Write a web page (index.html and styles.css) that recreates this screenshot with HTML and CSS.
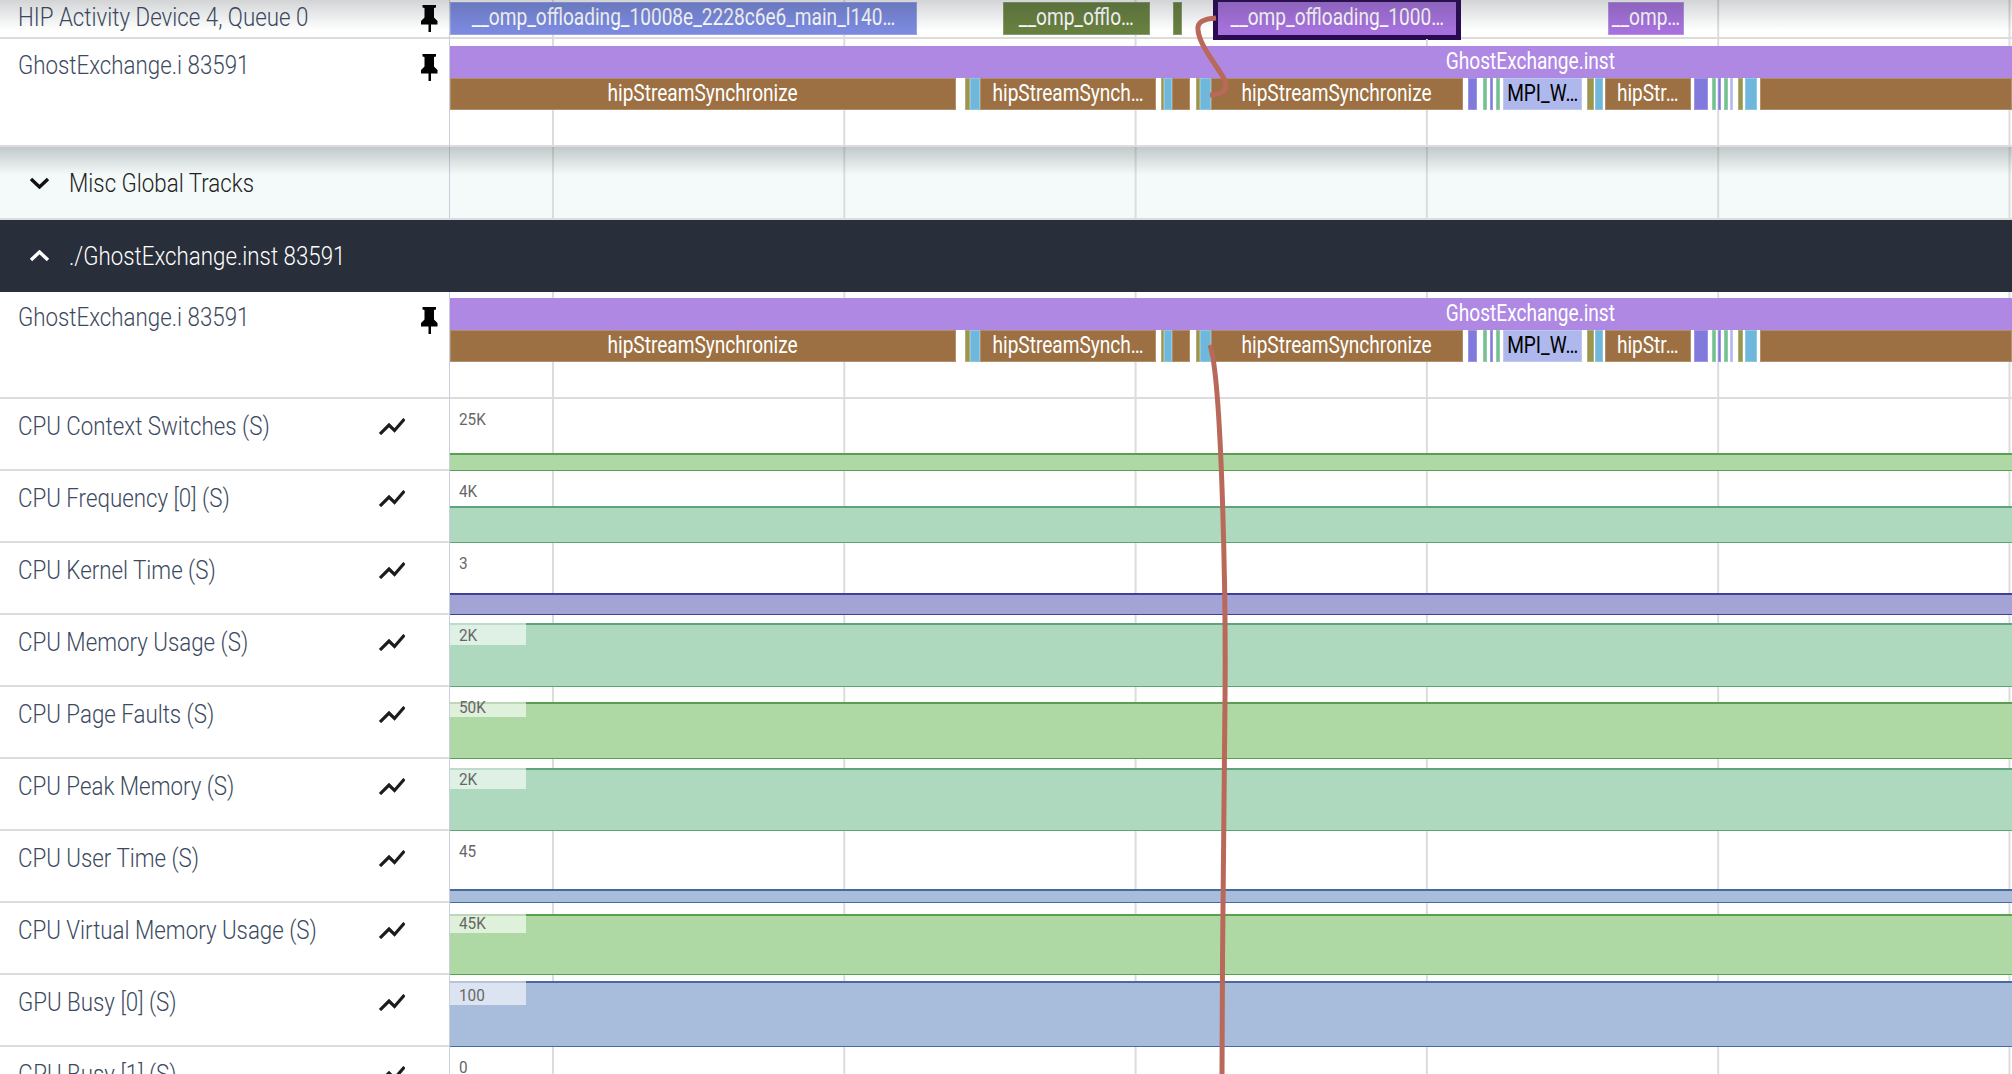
FILE: index.html
```html
<!DOCTYPE html>
<html lang="en">
<head>
    <meta charset="UTF-8">
    <title>GhostExchange trace</title>
    <link rel="stylesheet" href="styles.css">
</head>
<body>
<div class="page">
    <svg width="0" height="0" class="defs">
        <symbol id="pin" viewBox="0 0 17 27">
            <path d="M1.500 0h13.500v2.500l-2 .5v9.500l3.500 3.500v3.500h-6.500v7.500h-2.500v-7.500h-7.500v-3.500l3.500-3.500v-9.500l-2-.5z"></path>
        </symbol>
        <symbol id="chart" viewBox="0 0 26 17">
            <path d="M1 16l9-9 5.500 5.500 10-11.500" fill="none" stroke="#1c1c1c" stroke-width="3.200"></path>
        </symbol>
    </svg>

    <div class="row row-top">
        <div class="label"><span class="name">HIP Activity Device 4, Queue 0</span><svg class="pin"><use href="#pin"></use></svg></div>
        <div class="lane">
            <div class="slices">
                <div class="slice c-blue" style="left:0;width:467px"><span>__omp_offloading_10008e_2228c6e6_main_l140…</span></div>
                <div class="slice c-green" style="left:553px;width:147px"><span>__omp_offlo…</span></div>
                <div class="slice c-green" style="left:723px;width:9px"></div>
                <div class="slice c-violet selected" style="left:768px;width:238px"><span>__omp_offloading_1000…</span></div>
                <div class="slice c-violet" style="left:1158px;width:76px"><span>__omp…</span></div>
            </div>
        </div>
    </div>

    <div class="row row-process">
        <div class="label"><span class="name">GhostExchange.i 83591</span><svg class="pin"><use href="#pin"></use></svg></div>
        <div class="lane">
            <div class="process-bar"><span>GhostExchange.inst</span></div>
            <div class="slices">
                <div class="slice c-brown" style="left:0;width:506px"><span>hipStreamSynchronize</span></div>
                <div class="slice c-olive" style="left:515px;width:5px"></div>
                <div class="slice c-sky" style="left:520px;width:10px"></div>
                <div class="slice c-brown" style="left:530px;width:176px"><span>hipStreamSynch…</span></div>
                <div class="slice c-olive" style="left:711px;width:3px"></div>
                <div class="slice c-sky" style="left:714px;width:8px"></div>
                <div class="slice c-brown" style="left:722px;width:18px"></div>
                <div class="slice c-olive" style="left:746px;width:4px"></div>
                <div class="slice c-sky" style="left:750px;width:11px"></div>
                <div class="slice c-brown" style="left:761px;width:252px"><span>hipStreamSynchronize</span></div>
                <div class="slice c-indigo" style="left:1018px;width:9px"></div>
                <div class="slice c-mint" style="left:1033px;width:4px"></div>
                <div class="slice c-indigo" style="left:1040px;width:3px"></div>
                <div class="slice c-mint" style="left:1046px;width:4px"></div>
                <div class="slice c-lav" style="left:1053px;width:79px"><span>MPI_W…</span></div>
                <div class="slice c-olive" style="left:1137px;width:7px"></div>
                <div class="slice c-sky" style="left:1145px;width:8px"></div>
                <div class="slice c-brown" style="left:1155px;width:86px"><span>hipStr…</span></div>
                <div class="slice c-indigo" style="left:1244px;width:14px"></div>
                <div class="slice c-mint" style="left:1262px;width:4px"></div>
                <div class="slice c-indigo" style="left:1268px;width:3px"></div>
                <div class="slice c-mint" style="left:1274px;width:4px"></div>
                <div class="slice c-lav" style="left:1280px;width:3px"></div>
                <div class="slice c-olive" style="left:1288px;width:5px"></div>
                <div class="slice c-sky" style="left:1295px;width:12px"></div>
                <div class="slice c-brown" style="left:1310px;width:252px"></div>
            </div>
        </div>
    </div>

    <div class="row group-light">
        <div class="group-title">
            <svg class="chevron" viewBox="0 0 21 12"><path d="M2 2l8.500 8 8.500-8"></path></svg>
            <span class="name">Misc Global Tracks</span>
        </div>
        <div class="lane"></div>
    </div>
    <div class="group-dark">
        <div class="group-title">
            <svg class="chevron" viewBox="0 0 21 12"><path d="M2 10l8.500-8 8.500 8"></path></svg>
            <span class="name">./GhostExchange.inst 83591</span>
        </div>
    </div>

    <div class="row row-process row-process-2">
        <div class="label"><span class="name">GhostExchange.i 83591</span><svg class="pin"><use href="#pin"></use></svg></div>
        <div class="lane">
            <div class="process-bar"><span>GhostExchange.inst</span></div>
            <div class="slices">
                <div class="slice c-brown" style="left:0;width:506px"><span>hipStreamSynchronize</span></div>
                <div class="slice c-olive" style="left:515px;width:5px"></div>
                <div class="slice c-sky" style="left:520px;width:10px"></div>
                <div class="slice c-brown" style="left:530px;width:176px"><span>hipStreamSynch…</span></div>
                <div class="slice c-olive" style="left:711px;width:3px"></div>
                <div class="slice c-sky" style="left:714px;width:8px"></div>
                <div class="slice c-brown" style="left:722px;width:18px"></div>
                <div class="slice c-olive" style="left:746px;width:4px"></div>
                <div class="slice c-sky" style="left:750px;width:11px"></div>
                <div class="slice c-brown" style="left:761px;width:252px"><span>hipStreamSynchronize</span></div>
                <div class="slice c-indigo" style="left:1018px;width:9px"></div>
                <div class="slice c-mint" style="left:1033px;width:4px"></div>
                <div class="slice c-indigo" style="left:1040px;width:3px"></div>
                <div class="slice c-mint" style="left:1046px;width:4px"></div>
                <div class="slice c-lav" style="left:1053px;width:79px"><span>MPI_W…</span></div>
                <div class="slice c-olive" style="left:1137px;width:7px"></div>
                <div class="slice c-sky" style="left:1145px;width:8px"></div>
                <div class="slice c-brown" style="left:1155px;width:86px"><span>hipStr…</span></div>
                <div class="slice c-indigo" style="left:1244px;width:14px"></div>
                <div class="slice c-mint" style="left:1262px;width:4px"></div>
                <div class="slice c-indigo" style="left:1268px;width:3px"></div>
                <div class="slice c-mint" style="left:1274px;width:4px"></div>
                <div class="slice c-lav" style="left:1280px;width:3px"></div>
                <div class="slice c-olive" style="left:1288px;width:5px"></div>
                <div class="slice c-sky" style="left:1295px;width:12px"></div>
                <div class="slice c-brown" style="left:1310px;width:252px"></div>
            </div>
        </div>
    </div>

    <div class="row row-counter">
        <div class="label"><span class="name">CPU Context Switches (S)</span><svg class="chart-icon"><use href="#chart"></use></svg></div>
        <div class="lane"><div class="value"><span>25K</span></div><div class="band band-green" style="height:18px"></div></div>
    </div>
    <div class="row row-counter">
        <div class="label"><span class="name">CPU Frequency [0] (S)</span><svg class="chart-icon"><use href="#chart"></use></svg></div>
        <div class="lane"><div class="value"><span>4K</span></div><div class="band band-teal" style="height:37px"></div></div>
    </div>
    <div class="row row-counter">
        <div class="label"><span class="name">CPU Kernel Time (S)</span><svg class="chart-icon"><use href="#chart"></use></svg></div>
        <div class="lane"><div class="value"><span>3</span></div><div class="band band-purple" style="height:22px"></div></div>
    </div>
    <div class="row row-counter">
        <div class="label"><span class="name">CPU Memory Usage (S)</span><svg class="chart-icon"><use href="#chart"></use></svg></div>
        <div class="lane"><div class="value"><span>2K</span></div><div class="band band-teal" style="height:64px"></div></div>
    </div>
    <div class="row row-counter">
        <div class="label"><span class="name">CPU Page Faults (S)</span><svg class="chart-icon"><use href="#chart"></use></svg></div>
        <div class="lane"><div class="value"><span>50K</span></div><div class="band band-green" style="height:57px"></div></div>
    </div>
    <div class="row row-counter">
        <div class="label"><span class="name">CPU Peak Memory (S)</span><svg class="chart-icon"><use href="#chart"></use></svg></div>
        <div class="lane"><div class="value"><span>2K</span></div><div class="band band-teal" style="height:63px"></div></div>
    </div>
    <div class="row row-counter">
        <div class="label"><span class="name">CPU User Time (S)</span><svg class="chart-icon"><use href="#chart"></use></svg></div>
        <div class="lane"><div class="value"><span>45</span></div><div class="band band-blue" style="height:14px"></div></div>
    </div>
    <div class="row row-counter">
        <div class="label"><span class="name">CPU Virtual Memory Usage (S)</span><svg class="chart-icon"><use href="#chart"></use></svg></div>
        <div class="lane"><div class="value"><span>45K</span></div><div class="band band-green" style="height:61px"></div></div>
    </div>
    <div class="row row-counter">
        <div class="label"><span class="name">GPU Busy [0] (S)</span><svg class="chart-icon"><use href="#chart"></use></svg></div>
        <div class="lane"><div class="value"><span>100</span></div><div class="band band-blue" style="height:66px"></div></div>
    </div>
    <div class="row row-counter">
        <div class="label"><span class="name">GPU Busy [1] (S)</span><svg class="chart-icon"><use href="#chart"></use></svg></div>
        <div class="lane"><div class="value"><span>0</span></div></div>
    </div>

    <!-- flow arrows sit over everything -->
    <svg class="flows" viewBox="0 0 2012 1074">
        <path d="M1216 18C1203 19 1197 22 1198 30C1199 42 1210 57 1218 69C1224 78 1228 84 1225 89C1222 94 1216 95 1210 95"></path>
        <path d="M1210 345C1222 380 1226 600 1225 700C1224 850 1222 950 1222 1074"></path>
    </svg>
</div>
</body>
</html>
```
FILE: styles.css
```css
* {
    margin: 0;
    padding: 0;
    box-sizing: border-box;
}

html, body {
    height: 100%;
    overflow: hidden;
    background: #fff;
}

.page {
    position: relative;
    height: 1074px;
    overflow: hidden;
    font-family: Roboto, "Liberation Sans", sans-serif;
}

.defs {
    position: absolute;
}

.row {
    display: grid;
    grid-template-columns: 450px 1fr;
    border-bottom: 2px solid #dcdcdc;
}

.row-top {
    position: relative;
    height: 39px;
}

.row-top::after {
    content: "";
    position: absolute;
    left: 0;
    right: 0;
    top: 0;
    height: 30px;
    background: linear-gradient(rgba(30, 40, 50, .2), rgba(30, 40, 50, 0));
    pointer-events: none;
}

.row-process {
    height: 108px;
}

.row-process-2 {
    height: 107px;
}

.row-process-2 .process-bar {
    margin-top: 6px;
}

.row-counter {
    height: 72px;
}

.label {
    display: flex;
    justify-content: space-between;
    align-items: flex-start;
    padding: 12px 11px 0 18px;
    border-right: 1px solid #c8cfda;
    margin-bottom: -2px;
}

.row-process-2 .label {
    padding-top: 11px;
}

.row-top .label {
    padding-top: 3px;
}

.row-counter .label {
    padding: 13px 44px 0 18px;
}

.name {
    display: block;
    font-size: 25.500px;
    line-height: 28px;
    font-weight: 300;
    color: #3c4a60;
    white-space: nowrap;
    transform: scaleX(.875);
    transform-origin: left center;
}

.pin {
    width: 17px;
    height: 27px;
    margin-top: 3px;
}

.row-process-2 .pin {
    margin-top: 4px;
}

.row-top .pin {
    margin-top: 2px;
}

.chart-icon {
    width: 26px;
    height: 17px;
    margin-top: 6px;
}

.lane {
    position: relative;
    display: flex;
    flex-direction: column;
    background-image: linear-gradient(90deg, #dcdcdc 2px, transparent 2px);
    background-size: 291.3px 100%;
    background-position: 102px 0;
}

.row-counter .lane {
    justify-content: flex-end;
}

/* timeline slices */
.slices {
    position: relative;
    height: 32px;
}

.row-top .slices {
    height: 33px;
    margin-top: 2px;
}

.slice {
    position: absolute;
    top: 0;
    bottom: 0;
    display: flex;
    justify-content: center;
    align-items: center;
    padding-bottom: 3px;
    overflow: hidden;
    white-space: nowrap;
    color: #fff;
    font-size: 24px;
    box-shadow: inset 0 0 0 1px rgba(255, 255, 255, .22);
}

.slice span, .process-bar span {
    display: block;
    flex: none;
    transform: scaleX(.795);
}

.selected {
    overflow: visible;
    box-shadow: 0 0 0 5px #2a0b52;
}

.c-blue { background: #7b8ade; }
.c-green { background: #68803f; }
.c-violet { background: #a671dc; }
.c-brown { background: #9c7042; }
.c-olive { background: #9a9650; }
.c-sky { background: #6fb8dc; }
.c-indigo { background: #8279dd; }
.c-mint { background: #72c18f; }
.c-lav { background: #aeb8ec; color: #000; }

.process-bar {
    width: 2160px;
    height: 32px;
    margin-top: 7px;
    padding-bottom: 3px;
    flex: none;
    display: flex;
    justify-content: center;
    align-items: center;
    color: #fff;
    font-size: 24px;
    background: #ae88e3;
}

/* group headers */
.group-title {
    display: flex;
    align-items: center;
    gap: 19px;
    padding-left: 29px;
}

.group-title .chevron {
    width: 21px;
    height: 12px;
    flex: none;
}

.chevron path {
    fill: none;
    stroke-width: 3.400;
}

.group-light {
    position: relative;
    height: 73px;
    background-color: #f4faf9;
}

.group-light .group-title {
    border-right: 1px solid #c8cfda;
}

.group-light::after {
    content: "";
    position: absolute;
    left: 0;
    right: 0;
    top: 0;
    height: 28px;
    background: linear-gradient(rgba(50, 60, 70, .26), rgba(50, 60, 70, 0));
}

.group-light .chevron path {
    stroke: #111;
}

.group-light .name {
    color: #222;
}

.group-dark {
    display: flex;
    height: 72px;
    background: #282e3a;
}

.group-dark .chevron path {
    stroke: #fff;
}

.group-dark .name {
    color: #fff;
}

/* counter tracks */
.value {
    position: absolute;
    left: 0;
    top: 0;
    z-index: 1;
    width: 76px;
    height: 30px;
    padding: 9px 0 0 9px;
    background: rgba(255, 255, 255, .6);
    font-size: 17px;
    line-height: 22px;
    color: #666;
}

.value span {
    display: block;
    transform: scaleX(.9);
    transform-origin: left center;
}

.band {
    flex: none;
    margin-bottom: -2px;
    border-top: 2px solid;
    border-bottom: 1px solid;
}

.band-green { background: #aed9a5; border-color: #5a9f50; }
.band-teal { background: #aed9bf; border-color: #5ea37a; }
.band-purple { background: #a3a3d6; border-color: #3e3f9e; }
.band-blue { background: #a8bcdb; border-color: #4a6a9e; }

.flows {
    position: absolute;
    left: 0;
    top: 0;
    width: 2012px;
    height: 1074px;
    pointer-events: none;
}

.flows path {
    fill: none;
    stroke: #b9695a;
    stroke-width: 5;
}
```
